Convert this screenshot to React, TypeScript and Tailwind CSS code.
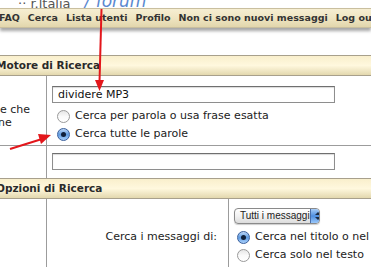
import React from 'react';

function Radio({ checked }: { checked?: boolean }) {
  return checked ? (
    <span className="flex h-[13px] w-[13px] shrink-0 items-center justify-center rounded-full border border-[#3a5f9c] bg-gradient-to-b from-[#bcd6f5] via-[#5f9be0] to-[#a9d0fb]">
      <span className="h-[5px] w-[5px] rounded-full bg-[#10203a]" />
    </span>
  ) : (
    <span className="h-[13px] w-[13px] shrink-0 rounded-full border border-[#9a9a9a] bg-gradient-to-b from-[#e6e6e6] via-[#fafafa] to-[#ffffff]" />
  );
}

function HeaderBar({ title }: { title: string }) {
  return (
    <div className="flex h-[21px] items-center border-y border-[#a8a08c] bg-gradient-to-b from-[#f9efcc] via-[#fff8de] to-[#e3d8ae] text-[10.5px] font-bold text-[#2a2a2a]">
      <span className="-ml-[4px]">{title}</span>
    </div>
  );
}

function TextBox({ value }: { value?: string }) {
  return (
    <div className="h-[17px] w-[283px] border border-[#8e8e8e] border-t-[#6f6f6f] bg-white px-[5px] text-[11px] leading-[15px] text-[#111] shadow-[inset_0_1px_1px_rgba(0,0,0,0.15)]">
      {value}
    </div>
  );
}

export default function App() {
  return (
    <div
      className="relative h-[267px] w-[371px] overflow-hidden bg-white text-[#222]"
      style={{ fontFamily: '"DejaVu Sans", Verdana, sans-serif' }}
    >
      {/* site title strip, cut off at top */}
      <div className="h-[8px] overflow-hidden">
        <div className="-mt-[7px] flex items-end gap-[14px] pl-[18px] leading-none">
          <span className="text-[13px] text-[#555]">·· r.ltalia</span>
          <span className="text-[17px] font-light italic text-[#5a88cf]">/ forum</span>
        </div>
      </div>

      {/* nav bar */}
      <div className="flex h-[20px] items-center gap-[8px] whitespace-nowrap border-y border-[#c9bf9f] bg-gradient-to-b from-[#f6eed2] via-[#efe5c2] to-[#e2d6ac] text-[9.5px] font-bold text-[#333] shadow-[0_3px_3px_rgba(0,0,0,0.35)]">
        <span className="-ml-[1px]">FAQ</span>
        <span>Cerca</span>
        <span>Lista utenti</span>
        <span>Profilo</span>
        <span>Non ci sono nuovi messaggi</span>
        <span>Log out</span>
      </div>

      <div className="h-[27px]" />

      <HeaderBar title="Motore di Ricerca" />

      {/* keywords row */}
      <div className="flex h-[70px] border-b border-[#9c9c9c] text-[11px] leading-[14px]">
        <div className="w-[47px] shrink-0 border-r border-[#9c9c9c] pt-[27px] leading-[13px] text-[#222]">
          <div>e che</div>
          <div className="-ml-[2px]">ne</div>
        </div>
        <div className="flex flex-col pl-[5px] pt-[10px] text-[#222]">
          <TextBox value="dividere MP3" />
          <div className="mt-[6px] flex items-center gap-[5px] pl-[5px]">
            <Radio />
            <span>Cerca per parola o usa frase esatta</span>
          </div>
          <div className="mt-[4px] flex items-center gap-[5px] pl-[5px]">
            <Radio checked />
            <span>Cerca tutte le parole</span>
          </div>
        </div>
      </div>

      {/* author row */}
      <div className="flex h-[32px]">
        <div className="w-[47px] shrink-0 border-r border-[#9c9c9c]" />
        <div className="pl-[5px] pt-[7px]">
          <TextBox />
        </div>
      </div>

      <HeaderBar title="Opzioni di Ricerca" />

      {/* options row */}
      <div className="flex h-[80px] text-[11px] leading-[14px] text-[#222]">
        <div className="w-[47px] shrink-0 border-r border-[#9c9c9c]" />
        <div className="flex w-[182px] shrink-0 items-start justify-end border-r border-[#9c9c9c] pr-[11px] pt-[31px]">
          Cerca i messaggi di:
        </div>
        <div className="flex flex-col whitespace-nowrap pl-[5px] pt-[9px]">
          <div className="flex h-[16px] w-[86px] items-center overflow-hidden rounded-[4px] border border-[#8a8a8a] bg-gradient-to-b from-[#ffffff] via-[#f2f2f2] to-[#dcdcdc] shadow-[0_1px_1px_rgba(0,0,0,0.2)]">
            <span
              className="flex-1 pl-[5px] text-[10px] leading-none"
              style={{ fontFamily: '"Liberation Sans", Arial, sans-serif' }}
            >
              Tutti i messaggi
            </span>
            <span className="flex h-full w-[15px] shrink-0 flex-col items-center justify-center gap-[2px] border-l border-[#4a6ea8] bg-gradient-to-b from-[#a9cdf6] via-[#4d8ee0] to-[#9ac8fa]">
              <svg width="6" height="3" viewBox="0 0 6 3"><path d="M0 3L3 0L6 3Z" fill="#1b2b44" /></svg>
              <svg width="6" height="3" viewBox="0 0 6 3"><path d="M0 0L3 3L6 0Z" fill="#1b2b44" /></svg>
            </span>
          </div>
          <div className="mt-[6px] flex items-center gap-[5px] pl-[3px]">
            <Radio checked />
            <span>Cerca nel titolo o nel testo</span>
          </div>
          <div className="mt-[4px] flex items-center gap-[5px] pl-[3px]">
            <Radio />
            <span>Cerca solo nel testo</span>
          </div>
        </div>
      </div>

      {/* red annotation arrows */}
      <svg className="pointer-events-none absolute left-0 top-0" width="371" height="267" viewBox="0 0 371 267">
        <line x1="101.5" y1="9" x2="99.5" y2="82" stroke="#e3161b" strokeWidth="2" />
        <path d="M95 80 L104 80 L99.5 91 Z" fill="#e3161b" />
        <line x1="10" y1="149" x2="42" y2="139" stroke="#e3161b" strokeWidth="2" />
        <path d="M38 134 L51 135 L41 144 Z" fill="#e3161b" />
      </svg>
    </div>
  );
}
